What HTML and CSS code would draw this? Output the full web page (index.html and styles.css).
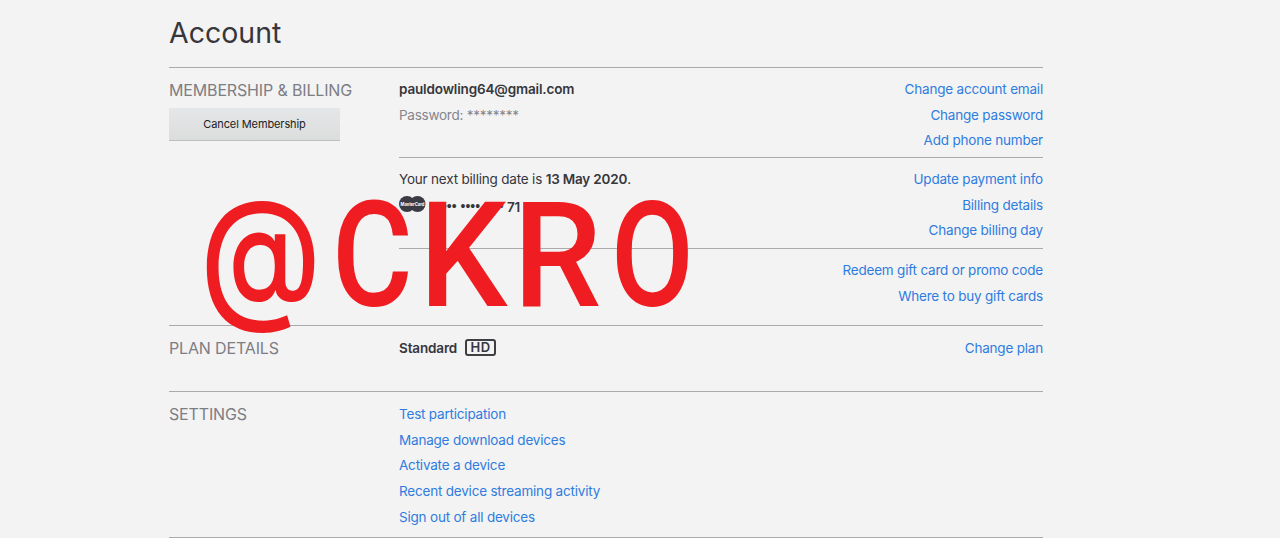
FILE: index.html
```html
<!DOCTYPE html>
<html lang="en">
<head>
    <meta charset="UTF-8">
    <meta name="viewport" content="width=device-width, initial-scale=1.0">
    <title>Account</title>
    <link rel="stylesheet" href="styles.css">
</head>
<body>
    <main class="account">
        <h1 class="title">Account</h1>

        <section class="section">
            <header class="section-header">
                <h2>MEMBERSHIP &amp; BILLING</h2>
                <button class="cancel-button">Cancel Membership</button>
            </header>
            <div class="section-content">
                <div class="group">
                    <div class="info">
                        <p class="email">pauldowling64@gmail.com</p>
                        <p class="muted">Password: ********</p>
                    </div>
                    <ul class="links">
                        <li><a href="#">Change account email</a></li>
                        <li><a href="#">Change password</a></li>
                        <li><a href="#">Add phone number</a></li>
                    </ul>
                </div>
                <div class="group">
                    <div class="info">
                        <p class="billing-date">Your next billing date is <b>13 May 2020</b>.</p>
                        <p class="card">
                            <svg class="card-logo" width="27" height="16" viewBox="0 0 27 16">
                                <circle cx="8" cy="8" r="8" />
                                <circle cx="18.5" cy="8" r="8" />
                                <text x="1.5" y="9.7" textLength="24" lengthAdjust="spacingAndGlyphs">MasterCard</text>
                            </svg>
                            <span class="dots">•••• •••• ••••</span>
                            <span class="digits">71</span>
                        </p>
                    </div>
                    <ul class="links">
                        <li><a href="#">Update payment info</a></li>
                        <li><a href="#">Billing details</a></li>
                        <li><a href="#">Change billing day</a></li>
                    </ul>
                </div>
                <div class="group">
                    <ul class="links">
                        <li><a href="#">Redeem gift card or promo code</a></li>
                        <li><a href="#">Where to buy gift cards</a></li>
                    </ul>
                </div>
            </div>
        </section>

        <section class="section plan">
            <header class="section-header">
                <h2>PLAN DETAILS</h2>
            </header>
            <div class="section-content">
                <div class="group">
                    <p class="plan-name"><b>Standard</b> <span class="hd">HD</span></p>
                    <ul class="links">
                        <li><a href="#">Change plan</a></li>
                    </ul>
                </div>
            </div>
        </section>

        <section class="section settings">
            <header class="section-header">
                <h2>SETTINGS</h2>
            </header>
            <div class="section-content">
                <ul class="links">
                    <li><a href="#">Test participation</a></li>
                    <li><a href="#">Manage download devices</a></li>
                    <li><a href="#">Activate a device</a></li>
                    <li><a href="#">Recent device streaming activity</a></li>
                    <li><a href="#">Sign out of all devices</a></li>
                </ul>
            </div>
        </section>
    </main>

    <div class="watermark"><span class="at">@</span><span class="c">C</span><span class="k">K</span><span class="r">R</span><span class="o">O</span></div>
</body>
</html>
```
FILE: styles.css
```css
* {
    box-sizing: border-box;
}

body {
    margin: 0;
    height: 538px;
    overflow: hidden;
    position: relative;
    background: #f3f3f3;
    color: #36363c;
    font: 13.5px/25.7px Inter, "Liberation Sans", sans-serif;
    letter-spacing: -.2px;
}

h1, h2, p, ul {
    margin: 0;
    padding: 0;
}

.account {
    width: 874px;
    margin-left: 169px;
}

.title {
    height: 67px;
    padding-top: 13px;
    font-size: 28.5px;
    font-weight: 400;
    line-height: 40px;
    letter-spacing: 0;
}

.section {
    display: flex;
    height: 258px;
    border-top: 1px solid #aaa;
}

.section-header {
    width: 230px;
    padding-top: 9px;
}

.section-header h2 {
    color: #7d7d84;
    font-size: 16px;
    font-weight: 400;
    line-height: 26px;
    letter-spacing: -.15px;
}

.cancel-button {
    display: block;
    width: 171px;
    height: 33px;
    margin-top: 5px;
    padding: 0;
    border: 0;
    border-bottom: 1px solid #bfbfbf;
    background: linear-gradient(#e5e6e7, #dcdddd);
    color: #222;
    font: 11px Inter, "Liberation Sans", sans-serif;
    letter-spacing: -.1px;
}

.section-content {
    flex: 1;
    padding-top: 9px;
}

.group {
    display: flex;
    justify-content: space-between;
    height: 80px;
}

.group + .group {
    height: 91px;
    padding-top: 9px;
    border-top: 1px solid #aaa;
}

.links {
    list-style: none;
}

.group .links {
    margin-left: auto;
    text-align: right;
}

a {
    color: #2f7ce0;
    text-decoration: none;
}

.email {
    font-weight: 600;
    letter-spacing: -.15px;
}

.muted {
    color: #85858c;
    letter-spacing: -.25px;
}

.card {
    display: flex;
}

.card-logo {
    margin-top: 3px;
    fill: #3a3b45;
}

.card-logo text {
    fill: #fff;
    font: bold 5px Inter, sans-serif;
    letter-spacing: 0;
}

.dots {
    width: 70px;
    margin-left: 11px;
    font: 14px/26px "Liberation Sans", sans-serif;
    letter-spacing: 0;
    white-space: nowrap;
}

.digits {
    padding-top: 2px;
    font-weight: 600;
}

.plan {
    height: 66px;
}

.plan .section-content,
.settings .section-content {
    padding-top: 10px;
}

.plan-name {
    display: flex;
    gap: 8px;
    letter-spacing: -.15px;
}

.hd {
    width: 31px;
    height: 17px;
    margin-top: 3px;
    border: 2px solid #3f3f43;
    border-radius: 3px;
    font-size: 13px;
    font-weight: 600;
    line-height: 13px;
    text-align: center;
    letter-spacing: .6px;
}

b {
    font-weight: 600;
}

.settings {
    height: 146px;
}

.account::after {
    content: "";
    display: block;
    border-top: 1px solid #aaa;
}

/* big text stamped over the page */
.watermark {
    position: absolute;
    top: 182px;
    left: 200.4px;
    display: flex;
    color: #ef1c22;
    font: 500 146px/150px Roboto, sans-serif;
    letter-spacing: 0;
}

.watermark span {
    transform-origin: 0 0;
}

.watermark .at {
    width: 131.3px;
    font-family: Inter, sans-serif;
    font-size: 145px;
    transform: translateY(-5px) scaleX(.85);
}

.watermark .c {
    width: 87.7px;
    transform: scaleX(.847);
}

.watermark .k {
    width: 94px;
    transform: scaleX(.957);
}

.watermark .r {
    width: 97.6px;
    transform: scaleX(.965);
}

.watermark .o {
    transform: scaleX(.823);
}
```
